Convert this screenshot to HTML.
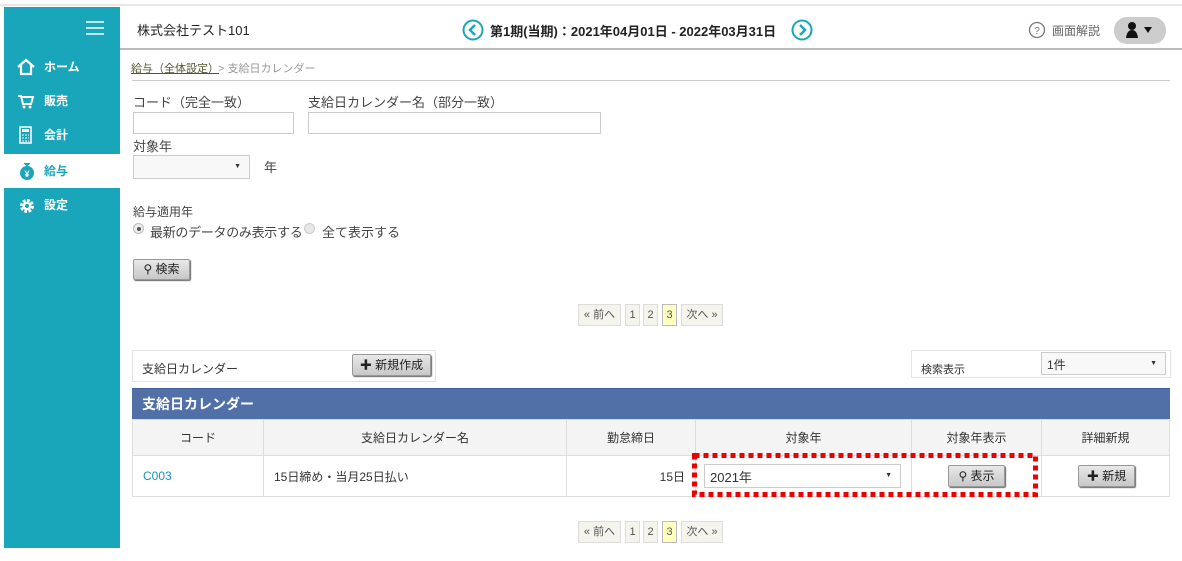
<!DOCTYPE html>
<html><head><meta charset="utf-8"><style>
*{box-sizing:border-box;margin:0;padding:0}
body{width:1182px;height:561px;background:#fff;font-family:"Liberation Sans","Noto Sans CJK JP",sans-serif;font-size:12px;color:#333;position:relative;overflow:hidden}
.a{position:absolute}
.side{left:4px;top:7px;width:116px;height:541px;background:#1aa6ba}
.nav{left:4px;width:116px;height:34px;color:#fff;font-weight:bold;font-size:12px;line-height:34px}
.nav span{position:absolute;left:40px}
.inp{border:1px solid #ccc;background:#fff}
.btn{background:linear-gradient(#e8e8e8,#c8c8c8);border:1px solid #999;box-shadow:1px 1px 1px #666;border-radius:2px;font-size:12px;text-align:center;color:#222}
.pg{border:1px solid #ddd;background:#f4f4ec;height:22px;line-height:20px;text-align:center;font-size:11px;color:#555}
td,th{border:1px solid #ddd;font-weight:normal;font-size:12px}
th{background:#f4f4f4;height:36px}
td{height:41px}
</style></head><body>
<div class="a" style="left:0;top:4px;width:1182px;height:2px;background:#e8e8e8"></div>
<div class="a side"></div>
<div class="a" style="left:86px;top:21px;width:18px;height:2px;background:#bfe7ee;box-shadow:0 6px 0 #bfe7ee,0 12px 0 #bfe7ee"></div>
<div class="a" style="left:120px;top:48px;width:1062px;height:2px;background:#bbb"></div>
<div class="a" style="left:137px;top:20px;font-size:13px;color:#222">株式会社テスト101</div>
<svg class="a" style="left:462px;top:19px" width="22" height="22"><circle cx="11" cy="11" r="9.5" fill="none" stroke="#1aa6ba" stroke-width="2"/><path d="M13 6L8 11L13 16" fill="none" stroke="#1aa6ba" stroke-width="2.5"/></svg>
<div class="a" style="left:490px;top:21px;font-size:13px;font-weight:bold;color:#222">第1期(当期)：2021年04月01日 - 2022年03月31日</div>
<svg class="a" style="left:791px;top:19px" width="22" height="22"><circle cx="11" cy="11" r="9.5" fill="none" stroke="#1aa6ba" stroke-width="2"/><path d="M9 6L14 11L9 16" fill="none" stroke="#1aa6ba" stroke-width="2.5"/></svg>
<svg class="a" style="left:1028px;top:21px" width="18" height="18"><circle cx="9" cy="9" r="7.5" fill="none" stroke="#777" stroke-width="1.3"/><text x="9" y="13" font-size="10" text-anchor="middle" fill="#777" font-family="Liberation Sans">?</text></svg>
<div class="a" style="left:1052px;top:22px;color:#666;font-size:12px">画面解説</div>
<div class="a" style="left:1114px;top:17px;width:52px;height:27px;border-radius:13px;background:#ccc"></div>
<svg class="a" style="left:1124px;top:21px" width="34" height="18"><circle cx="8" cy="5" r="4" fill="#111"/><path d="M2 17Q3 9 8 9Q13 9 14 17Z" fill="#111"/><path d="M20 6h8l-4 6z" fill="#111"/></svg>

<div class="a nav" style="top:50px"><svg class="a" style="left:12px;top:8px" width="20" height="18"><path d="M2 9L10 2L18 9M5 7V16H15V7" fill="none" stroke="#fff" stroke-width="2.2"/></svg><span>ホーム</span></div>
<div class="a nav" style="top:84px"><svg class="a" style="left:13px;top:10px" width="18" height="16"><path d="M1 2H4L6 10H14L16 3H5" fill="none" stroke="#fff" stroke-width="2"/><circle cx="7" cy="13" r="1.5" fill="#fff"/><circle cx="13" cy="13" r="1.5" fill="#fff"/></svg><span>販売</span></div>
<div class="a nav" style="top:118px"><svg class="a" style="left:15px;top:8px" width="14" height="18"><rect x="1" y="1" width="11" height="16" fill="none" stroke="#fff" stroke-width="1.5"/><rect x="3" y="3" width="7" height="3" fill="#fff"/><path d="M3 9h2M6 9h2M9 9h1M3 12h2M6 12h2M9 12h1M3 15h2M6 15h2M9 15h1" stroke="#fff"/></svg><span>会計</span></div>
<div class="a nav" style="top:154px;background:#fff;color:#1aa6ba"><svg class="a" style="left:14px;top:7px" width="18" height="20"><path d="M6 2L9 5L12 2" fill="#1aa6ba" stroke="#1aa6ba"/><circle cx="9" cy="12" r="7" fill="#1aa6ba"/><text x="9" y="16" font-size="9" fill="#fff" text-anchor="middle">¥</text></svg><span>給与</span></div>
<div class="a nav" style="top:188px"><svg class="a" style="left:14px;top:9px" width="18" height="18"><circle cx="9" cy="9" r="5" fill="none" stroke="#fff" stroke-width="4" stroke-dasharray="2.5 1.4"/><circle cx="9" cy="9" r="4.5" fill="#fff"/><circle cx="9" cy="9" r="2" fill="#1aa6ba"/></svg><span>設定</span></div>

<div class="a" style="left:131px;top:60px;font-size:11px;color:#553;text-decoration:underline">給与（全体設定）</div>
<div class="a" style="left:218px;top:60px;font-size:11px;color:#999">&gt; 支給日カレンダー</div>
<div class="a" style="left:132px;top:80px;width:1038px;height:1px;background:#ccc"></div>
<div class="a" style="left:133px;top:92px;font-size:13px;color:#444">コード（完全一致）</div>
<div class="a" style="left:308px;top:92px;font-size:13px;color:#444">支給日カレンダー名（部分一致）</div>
<div class="a inp" style="left:133px;top:112px;width:161px;height:22px"></div>
<div class="a inp" style="left:308px;top:112px;width:293px;height:22px"></div>
<div class="a" style="left:133px;top:136px;font-size:13px;color:#444">対象年</div>
<div class="a inp" style="left:133px;top:155px;width:117px;height:24px;background:#f8f8f8"><span class="a" style="right:8px;top:7px;font-size:7px">▼</span></div>
<div class="a" style="left:264px;top:157px;font-size:13px;color:#444">年</div>
<div class="a" style="left:133px;top:203px;font-size:12px;color:#444">給与適用年</div>
<div class="a" style="left:133px;top:223px;width:11px;height:11px;border-radius:50%;border:1px solid #bbb;background:#eee"><div class="a" style="left:3px;top:3px;width:4px;height:4px;border-radius:50%;background:#555"></div></div>
<div class="a" style="left:150px;top:222px;font-size:13px;color:#444;letter-spacing:-0.3px">最新のデータのみ表示する</div>
<div class="a" style="left:304px;top:223px;width:11px;height:11px;border-radius:50%;border:1px solid #ccc;background:#e8e8e8"></div>
<div class="a" style="left:322px;top:222px;font-size:13px;color:#444">全て表示する</div>
<div class="a btn" style="left:133px;top:259px;width:57px;height:21px;line-height:19px">⚲ 検索</div>

<div class="a pg" style="left:578px;top:304px;width:43px">« 前へ</div>
<div class="a pg" style="left:625px;top:304px;width:15px">1</div>
<div class="a pg" style="left:643px;top:304px;width:15px">2</div>
<div class="a pg" style="left:662px;top:304px;width:15px;background:#ffffc0;border-color:#bbb">3</div>
<div class="a pg" style="left:681px;top:304px;width:42px">次へ »</div>

<div class="a" style="left:132px;top:350px;width:304px;height:32px;border:1px solid #e4e4e4"></div>
<div class="a" style="left:142px;top:360px">支給日カレンダー</div>
<div class="a btn" style="left:352px;top:354px;width:79px;height:22px;line-height:20px">✚ 新規作成</div>
<div class="a" style="left:911px;top:350px;width:260px;height:28px;border:1px solid #e4e4e4"></div>
<div class="a" style="left:921px;top:361px;font-size:11px">検索表示</div>
<div class="a inp" style="left:1041px;top:352px;width:125px;height:23px;background:#f8f8f8;padding:3px 5px">1件<span class="a" style="right:8px;top:7px;font-size:7px">▼</span></div>

<div class="a" style="left:132px;top:388px;width:1038px;height:31px;background:#5170a8;border-top:1px solid #4060a0;color:#fff;font-size:14px;font-weight:bold;line-height:30px;padding-left:10px">支給日カレンダー</div>
<table class="a" style="left:132px;top:419px;width:1038px;border-collapse:collapse">
<tr><th style="width:131px">コード</th><th style="width:303px">支給日カレンダー名</th><th style="width:129px">勤怠締日</th><th style="width:216px">対象年</th><th style="width:130px">対象年表示</th><th>詳細新規</th></tr>
<tr><td style="color:#1a8fc0;padding-left:10px">C003</td><td style="padding-left:10px">15日締め・当月25日払い</td><td style="text-align:right;padding-right:10px">15日</td><td></td><td></td><td></td></tr>
</table>
<div class="a inp" style="left:704px;top:464px;width:197px;height:24px;padding:2px 5px;font-size:13px">2021年<span class="a" style="right:8px;top:7px;font-size:7px">▼</span></div>
<div class="a btn" style="left:948px;top:465px;width:57px;height:22px;line-height:20px">⚲ 表示</div>
<div class="a btn" style="left:1078px;top:465px;width:57px;height:22px;line-height:20px">✚ 新規</div>
<svg class="a" style="left:692px;top:453px" width="346" height="44"><rect x="2.5" y="2.5" width="341" height="39" fill="none" stroke="#e00" stroke-width="5" stroke-dasharray="5 4"/></svg>

<div class="a pg" style="left:578px;top:521px;width:43px">« 前へ</div>
<div class="a pg" style="left:625px;top:521px;width:15px">1</div>
<div class="a pg" style="left:643px;top:521px;width:15px">2</div>
<div class="a pg" style="left:662px;top:521px;width:15px;background:#ffffc0;border-color:#bbb">3</div>
<div class="a pg" style="left:681px;top:521px;width:42px">次へ »</div>
</body></html>
